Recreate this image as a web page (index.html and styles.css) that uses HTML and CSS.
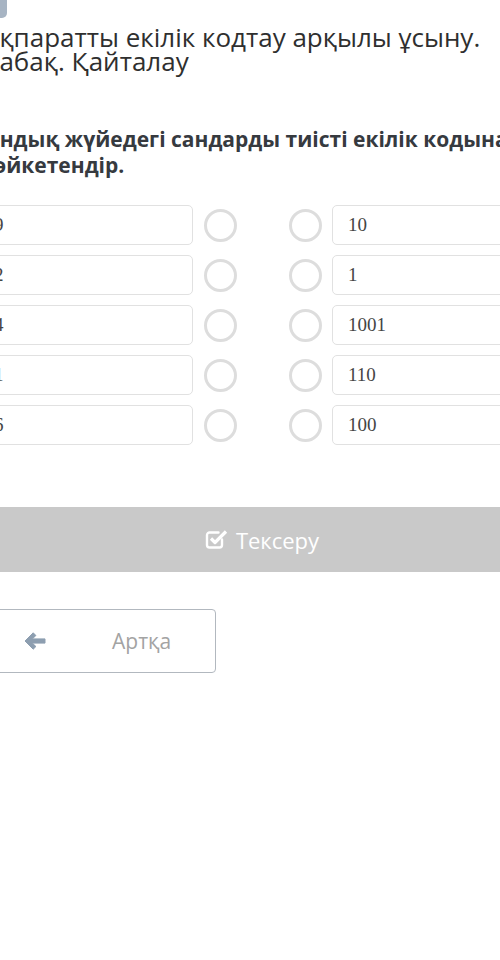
FILE: index.html
```html
<!DOCTYPE html>
<html lang="kk">
<head>
<meta charset="utf-8">
<link rel="stylesheet" href="styles.css">
</head>
<body>
<div class="page">
  <div class="head">
    <div class="badge"></div>
    <h1 class="title">Ақпаратты екілік кодтау арқылы ұсыну.<br>Сабақ. Қайталау</h1>
    <p class="question">Ондық жүйедегі сандарды тиісті екілік кодына<br>сәйкетендір.</p>
  </div>
  <div class="match">
    <div class="box">9</div><span class="dot"></span><span class="dot"></span><div class="box">10</div>
    <div class="box">2</div><span class="dot"></span><span class="dot"></span><div class="box">1</div>
    <div class="box">4</div><span class="dot"></span><span class="dot"></span><div class="box">1001</div>
    <div class="box">1</div><span class="dot"></span><span class="dot"></span><div class="box">110</div>
    <div class="box">6</div><span class="dot"></span><span class="dot"></span><div class="box">100</div>
  </div>
  <div class="check">
    <svg class="check-icon" width="24" height="22" viewBox="0 0 24 22" aria-hidden="true">
      <path d="M17 11.5v5.5a2.5 2.5 0 0 1-2.5 2.5h-10A2.5 2.5 0 0 1 2 17V7a2.5 2.5 0 0 1 2.5-2.5h9" fill="none" stroke="#fff" stroke-width="2.4" stroke-linecap="round"/>
      <path d="M6 10.5l4 4L21 3.5" fill="none" stroke="#fff" stroke-width="3.2" stroke-linejoin="round"/>
    </svg>
    <span>Тексеру</span>
  </div>
  <div class="back">
    <svg class="back-icon" width="22" height="18" viewBox="0 0 22 18" aria-hidden="true">
      <path d="M9.2 0.8L1 9l8.2 8.2 2.7-2.7-3.6-3.4H21V6.9H8.3l3.6-3.4z" fill="#8d9eb0" stroke="#8d9eb0" stroke-width="1" stroke-linejoin="round"/>
    </svg>
    <span class="back-text">Артқа</span>
  </div>
</div>
</body>
</html>
```
FILE: styles.css
```css
html, body {
  margin: 0;
  padding: 0;
  background: #ffffff;
  overflow: hidden;
}
body {
  font-family: "Open Sans", "Noto Sans", sans-serif;
  color: #333;
}
.page {
  margin-left: -22px;
  width: 568px;
}
.head {
  padding-left: 5px;
}
.badge {
  width: 29px;
  height: 18px;
  background: #a7b4c3;
  border-radius: 0 0 5px 0;
  margin-left: -5px;
}
.title {
  margin: 7px 0 0;
  font-size: 26px;
  line-height: 24px;
  font-weight: 400;
  color: #2f2f2f;
  white-space: nowrap;
}
.question {
  margin: 53px 0 0;
  font-size: 21px;
  line-height: 26px;
  font-weight: 700;
  color: #363a3f;
  white-space: nowrap;
}
.match {
  margin-top: 27px;
  display: grid;
  grid-template-columns: 215px 32px 32px 215px;
  column-gap: 11px;
  row-gap: 10px;
  align-items: center;
}
.match .dot:nth-of-type(2n) {
  margin-left: 42px;
}
.match .box:nth-child(4n) {
  margin-left: 42px;
  width: 205px;
}
.box {
  box-sizing: border-box;
  height: 40px;
  border: 1px solid #e1e1e1;
  border-radius: 5px;
  padding-left: 15px;
  display: flex;
  align-items: center;
  font-family: "Liberation Serif", serif;
  font-size: 19px;
  color: #454545;
  background: #fff;
}
.dot {
  box-sizing: border-box;
  width: 33px;
  height: 33px;
  border: 3px solid #dddddd;
  border-radius: 50%;
  background: #fff;
}
.check {
  margin-top: 62px;
  height: 65px;
  background: #c9c9c9;
  display: flex;
  align-items: center;
  justify-content: center;
  gap: 7px;
  color: #fff;
  font-size: 22px;
}
.check-icon {
  margin-top: -2px;
}
.back {
  margin-top: 37px;
  box-sizing: border-box;
  width: 238px;
  height: 64px;
  border: 1px solid #b2b8bf;
  border-radius: 4px;
  display: flex;
  align-items: center;
  padding-left: 45px;
}
.back-text {
  margin-left: 66px;
  font-size: 21px;
  color: #a3a3a3;
}
```
